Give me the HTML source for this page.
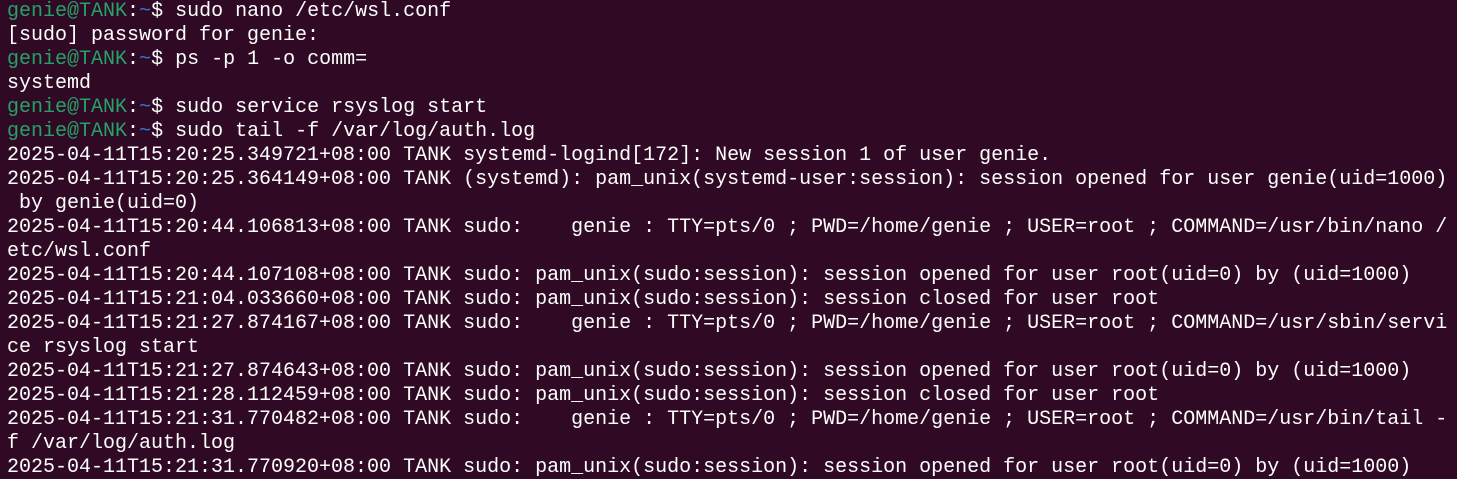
<!DOCTYPE html>
<html><head><meta charset="utf-8"><style>
html,body{margin:0;padding:0;background:#300a24;width:1457px;height:479px;overflow:hidden}
pre{margin:0;padding:0 0 0 7px;position:relative;top:0px;font-family:"Liberation Mono","DejaVu Sans Mono",monospace;font-size:20px;line-height:24px;color:#ffffff;white-space:pre}
.g{color:#26a269}.b{color:#2a7bde}
</style></head><body><pre><span class="g">genie@TANK</span>:<span class="b">~</span>$ sudo nano /etc/wsl.conf
[sudo] password for genie:
<span class="g">genie@TANK</span>:<span class="b">~</span>$ ps -p 1 -o comm=
systemd
<span class="g">genie@TANK</span>:<span class="b">~</span>$ sudo service rsyslog start
<span class="g">genie@TANK</span>:<span class="b">~</span>$ sudo tail -f /var/log/auth.log
2025-04-11T15:20:25.349721+08:00 TANK systemd-logind[172]: New session 1 of user genie.
2025-04-11T15:20:25.364149+08:00 TANK (systemd): pam_unix(systemd-user:session): session opened for user genie(uid=1000)
 by genie(uid=0)
2025-04-11T15:20:44.106813+08:00 TANK sudo:    genie : TTY=pts/0 ; PWD=/home/genie ; USER=root ; COMMAND=/usr/bin/nano /
etc/wsl.conf
2025-04-11T15:20:44.107108+08:00 TANK sudo: pam_unix(sudo:session): session opened for user root(uid=0) by (uid=1000)
2025-04-11T15:21:04.033660+08:00 TANK sudo: pam_unix(sudo:session): session closed for user root
2025-04-11T15:21:27.874167+08:00 TANK sudo:    genie : TTY=pts/0 ; PWD=/home/genie ; USER=root ; COMMAND=/usr/sbin/servi
ce rsyslog start
2025-04-11T15:21:27.874643+08:00 TANK sudo: pam_unix(sudo:session): session opened for user root(uid=0) by (uid=1000)
2025-04-11T15:21:28.112459+08:00 TANK sudo: pam_unix(sudo:session): session closed for user root
2025-04-11T15:21:31.770482+08:00 TANK sudo:    genie : TTY=pts/0 ; PWD=/home/genie ; USER=root ; COMMAND=/usr/bin/tail -
f /var/log/auth.log
2025-04-11T15:21:31.770920+08:00 TANK sudo: pam_unix(sudo:session): session opened for user root(uid=0) by (uid=1000)
</pre></body></html>
